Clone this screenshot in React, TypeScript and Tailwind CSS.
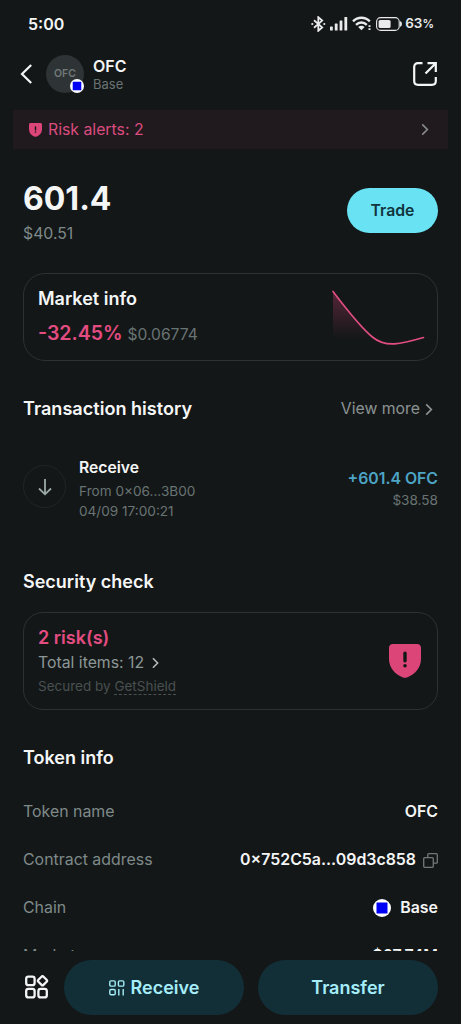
import React from 'react';

interface InfoRowProps {
  label: string;
  children: React.ReactNode;
}

const Chevron: React.FC<{ className?: string }> = ({ className }) => (
  <svg className={className} viewBox="0 0 8 14" fill="none" stroke="currentColor" strokeWidth="1.8">
    <path d="M1 1.5 L6.5 7 L1 12.5" />
  </svg>
);

const ShieldAlert: React.FC<{ className?: string }> = ({ className }) => (
  <svg className={className} viewBox="0 0 32 34" fill="none">
    <path d="M4 0H28C30.5 0 32 1.5 32 4V15C32 24 25.5 30.5 18.5 33.3C16.8 34 15.2 34 13.5 33.3C6.5 30.5 0 24 0 15V4C0 1.5 1.5 0 4 0Z" fill="#db4578" />
    <path d="M16 9.2V16.8" stroke="#141718" strokeWidth="3.4" strokeLinecap="round" />
    <circle cx="16" cy="21.8" r="1.8" fill="#141718" />
  </svg>
);

const BaseLogo: React.FC<{ className?: string }> = ({ className }) => (
  <svg className={className} viewBox="0 0 18 18">
    <circle cx="9" cy="9" r="9" fill="#fff" />
    <rect x="3.5" y="3.5" width="11" height="11" rx="0.5" fill="#0000f5" />
  </svg>
);

const StatusIcons = () => (
  <div className="flex items-center text-[#e9ebeb]">
    <svg className="h-4 w-[15px]" viewBox="0 0 15 16" fill="none" stroke="currentColor" strokeWidth="1.8">
      <path d="M3 4.2 L11.2 11.4 L7.3 14.8 V1.2 L11.2 4.6 L3 11.8" />
      <circle cx="1.3" cy="8" r="1.1" fill="currentColor" stroke="none" />
      <circle cx="13.3" cy="8" r="1.1" fill="currentColor" stroke="none" />
    </svg>
    <svg className="ml-1 h-[15px] w-[18px]" viewBox="0 0 18 15" fill="currentColor">
      <rect x="0" y="10.5" width="2.8" height="4" rx="0.6" />
      <rect x="4.8" y="7.6" width="2.8" height="6.9" rx="0.6" />
      <rect x="9.6" y="4.4" width="2.8" height="10.1" rx="0.6" />
      <rect x="14.4" y="1" width="2.8" height="13.5" rx="0.6" />
    </svg>
    <svg className="ml-1 h-[15px] w-[20px]" viewBox="0 0 20 15" fill="none" stroke="currentColor" strokeWidth="2.4">
      <path d="M1 5.4 C5.8 0.6 13 0.6 17.8 5.4" />
      <path d="M4 8.8 C7 5.7 11.8 5.7 14.8 8.8" />
      <path d="M6.2 11 C8 9.4 10.8 9.4 12.6 11 L9.4 14.2 Z" fill="currentColor" stroke="none" />
      <path d="M17.5 9.2 V11 M17.5 12.2 V14" strokeWidth="2" />
    </svg>
    <svg className="ml-1 h-[14px] w-[26px]" viewBox="0 0 26 14" fill="none">
      <rect x="0.6" y="0.6" width="22.6" height="12.8" rx="4" stroke="currentColor" strokeWidth="1.1" />
      <rect x="2.6" y="3" width="12" height="8" rx="1.6" fill="currentColor" />
      <path d="M24.6 4.6 C25.6 5.6 25.6 8.4 24.6 9.4 Z" fill="currentColor" stroke="currentColor" />
    </svg>
    <span className="ml-[3px] text-[13.5px] font-semibold leading-none">
      63<span className="text-[11.5px]">%</span>
    </span>
  </div>
);

const PriceChart = () => (
  <svg className="h-[58px] w-[94px]" viewBox="0 0 94 58" fill="none">
    <defs>
      <linearGradient id="priceFill" x1="0" y1="0" x2="0" y2="1">
        <stop offset="0" stopColor="#e0457c" stopOpacity="0.32" />
        <stop offset="1" stopColor="#e0457c" stopOpacity="0" />
      </linearGradient>
    </defs>
    <path d="M2 3.5 C14 21 26 38 42 50 V50 H2 Z" fill="url(#priceFill)" />
    <path d="M2 3.5 C16 22 30 40 42 49.5 C55 60 70 56 92.5 49.5" stroke="#e14d82" strokeWidth="1.7" strokeLinecap="round" />
  </svg>
);

const InfoRow: React.FC<InfoRowProps> = ({ label, children }) => (
  <div className="flex h-[47.8px] shrink-0 items-center justify-between text-[15.9px]">
    <span className="text-[#7e8a89]">{label}</span>
    <span className="flex items-center font-semibold text-[#f4f6f6]">{children}</span>
  </div>
);

const App: React.FC = () => {
  return (
    <div className="flex h-screen w-full flex-col overflow-hidden bg-[#141718] font-['Inter',sans-serif] text-[#f4f6f6]">
      <div className="flex min-h-0 flex-1 flex-col overflow-hidden">
        {/* status bar */}
        <div className="flex h-[47px] shrink-0 items-center justify-between pr-[27px] pl-[28px]">
          <span className="text-[16px] font-semibold">5:00</span>
          <StatusIcons />
        </div>

        <header className="flex h-[54px] shrink-0 items-center pr-[24px] pl-[20px]">
          <svg className="h-5 w-3" viewBox="0 0 12 20" fill="none" stroke="#f4f6f6" strokeWidth="2.2">
            <path d="M11.2 1 L2 10 L11.2 19" />
          </svg>
          <div className="relative ml-[14px] flex h-[38px] w-[38px] items-center justify-center rounded-full bg-[#2e3435]">
            <span className="text-[10.5px] font-semibold text-[#707878]">OFC</span>
            <BaseLogo className="absolute right-0 bottom-0 h-[14px] w-[14px]" />
          </div>
          <div className="mt-[2px] ml-[9px] flex flex-col">
            <span className="text-[16px] leading-[19px] font-semibold">OFC</span>
            <span className="text-[13px] leading-[17px] text-[#687473]">Base</span>
          </div>
          <svg className="ml-auto h-6 w-6" viewBox="0 0 24 24" fill="none" stroke="#f4f6f6" strokeWidth="2.2">
            <path d="M9.5 1.2 H5 C2.5 1.2 1.2 2.5 1.2 5 V19 C1.2 21.5 2.5 22.8 5 22.8 H19 C21.5 22.8 22.8 21.5 22.8 19 V15" />
            <path d="M14.5 1.2 H22.8 V10 M22.8 1.2 L12.5 11.5" />
          </svg>
        </header>

        <div className="mx-[13px] mt-[9px] flex h-[39px] shrink-0 items-center bg-[#20191e] pr-[19px] pl-[16px] text-[#db4c7f]">
          <ShieldAlert className="h-[14px] w-[13px]" />
          <span className="ml-[6px] text-[15.8px]">Risk alerts: 2</span>
          <Chevron className="ml-auto h-[13px] w-2 text-[#858989]" />
        </div>

        <main className="flex flex-col px-[23px]">
          <section className="mt-[32px] flex h-[67px] shrink-0 items-start justify-between">
            <div className="flex flex-col">
              <span className="text-[32px] leading-[36px] font-bold">601.4</span>
              <span className="mt-[7px] text-[15.8px] leading-5 text-[#7e8a89]">$40.51</span>
            </div>
            <button className="mt-[7px] h-[45px] w-[91px] rounded-full bg-[#69e3f3] text-[15.8px] font-semibold text-[#11343d]">
              Trade
            </button>
          </section>

          <section className="mt-[25px] flex h-[88px] shrink-0 items-center justify-between rounded-[22px] border border-[#2c3132] pr-[12px] pl-[14px]">
            <div className="flex flex-col pt-[2px]">
              <span className="text-[18px] leading-[22px] font-semibold">Market info</span>
              <div className="mt-[10px] flex items-baseline leading-[26px]">
                <span className="text-[19.5px] font-semibold text-[#e34c80]">-32.45%</span>
                <span className="ml-[5px] text-[15.6px] text-[#687473]">$0.06774</span>
              </div>
            </div>
            <PriceChart />
          </section>

          <div className="mt-[35px] flex h-[26px] shrink-0 items-center justify-between">
            <h2 className="text-[18.1px] font-semibold">Transaction history</h2>
            <span className="flex items-center pr-[5px] text-[15.8px] text-[#8b9393]">
              View more
              <Chevron className="ml-[5px] h-[13px] w-2" />
            </span>
          </div>

          <div className="mt-[35px] flex h-[62px] shrink-0 items-center">
            <div className="mt-[-3px] flex h-[43px] w-[43px] items-center justify-center rounded-full border border-[#202526]">
              <svg className="h-[18px] w-[14px]" viewBox="0 0 14 18" fill="none" stroke="#9ba9a6" strokeWidth="1.8">
                <path d="M7 1 V16 M1 10.5 L7 16.3 L13 10.5" />
              </svg>
            </div>
            <div className="mt-px ml-[13px] flex flex-col text-[13.6px] text-[#687473]">
              <span className="text-[15.7px] leading-[22px] font-semibold text-[#f4f6f6]">Receive</span>
              <span className="mt-[2px] leading-5">From 0×06...3B00</span>
              <span className="leading-5">04/09 17:00:21</span>
            </div>
            <div className="mt-[1px] ml-auto flex flex-col items-end">
              <span className="text-[15.8px] leading-[22px] font-semibold text-[#4ca5c5]">+601.4 OFC</span>
              <span className="text-[13.6px] leading-5 text-[#687473]">$38.58</span>
            </div>
          </div>

          <h2 className="mt-[51px] h-[24px] shrink-0 text-[18px] leading-[24px] font-semibold">Security check</h2>
          <section className="mt-[18px] flex h-[98px] shrink-0 items-center justify-between rounded-[20px] border border-[#2c3132] pr-[16px] pl-[14px]">
            <div className="flex flex-col">
              <span className="text-[18px] leading-[26px] font-semibold text-[#e34c80]">2 risk(s)</span>
              <span className="flex items-center text-[15.8px] leading-[24px] text-[#8b9796]">
                Total items: 12
                <Chevron className="ml-[8px] h-[12px] w-[7px] text-[#b5bdbc]" />
              </span>
              <span className="text-[13.5px] leading-[23px] text-[#485150]">
                Secured by <span className="inline-block border-b border-dashed border-[#485150] leading-[16px]">GetShield</span>
              </span>
            </div>
            <ShieldAlert className="h-[34px] w-[32px]" />
          </section>

          <h2 className="mt-[36px] h-[24px] shrink-0 text-[18px] leading-[24px] font-semibold">Token info</h2>
          <div className="mt-[18.5px] flex flex-col">
            <InfoRow label="Token name">OFC</InfoRow>
            <InfoRow label="Contract address">
              0×752C5a...09d3c858
              <svg className="ml-[7px] h-[15px] w-[15px]" viewBox="0 0 15 15" fill="none" stroke="#717978" strokeWidth="1.3">
                <rect x="0.7" y="4.7" width="9.6" height="9.6" rx="1" />
                <path d="M4.8 4.7 V1.7 C4.8 1 5.1 0.7 5.8 0.7 H13.3 C14 0.7 14.3 1 14.3 1.7 V9.2 C14.3 9.9 14 10.2 13.3 10.2 H10.3" />
              </svg>
            </InfoRow>
            <InfoRow label="Chain">
              <BaseLogo className="mr-[9px] h-[18px] w-[18px]" />
              Base
            </InfoRow>
            <InfoRow label="Market cap">$67.74M</InfoRow>
          </div>
        </main>
      </div>

      <footer className="flex h-[73px] shrink-0 items-start bg-[#141718] pt-[9px] pr-[23px] pl-[25px] text-[18px] font-semibold text-[#a5edf8]">
        <svg className="mt-[15px] h-6 w-6" viewBox="0 0 24 24" fill="none" stroke="#f4f6f6" strokeWidth="2.3">
          <rect x="1.2" y="1.6" width="8.4" height="8.6" rx="2.2" />
          <rect x="1.2" y="13.8" width="8.4" height="8.6" rx="2.2" />
          <rect x="13.4" y="13.8" width="8.4" height="8.6" rx="2.2" />
          <rect x="13.9" y="2.2" width="7.2" height="7.2" rx="1.4" transform="rotate(45 17.5 5.8)" />
        </svg>
        <button className="ml-[15px] flex h-[55px] w-[180px] items-center justify-center rounded-full bg-[#122f38]">
          <svg className="mr-[6px] h-4 w-4" viewBox="0 0 16 16" fill="none" stroke="currentColor" strokeWidth="1.4">
            <rect x="0.8" y="0.9" width="5.4" height="5.2" rx="1.2" />
            <rect x="9.4" y="0.9" width="5.4" height="5.2" rx="1.2" />
            <rect x="0.8" y="9.5" width="5.4" height="5.2" rx="1.2" />
            <path d="M9.8 9 V15.4 M14.2 9 V15.4" />
          </svg>
          Receive
        </button>
        <button className="ml-[14px] h-[55px] w-[180px] rounded-full bg-[#122f38]">Transfer</button>
      </footer>
    </div>
  );
};

export default App;
